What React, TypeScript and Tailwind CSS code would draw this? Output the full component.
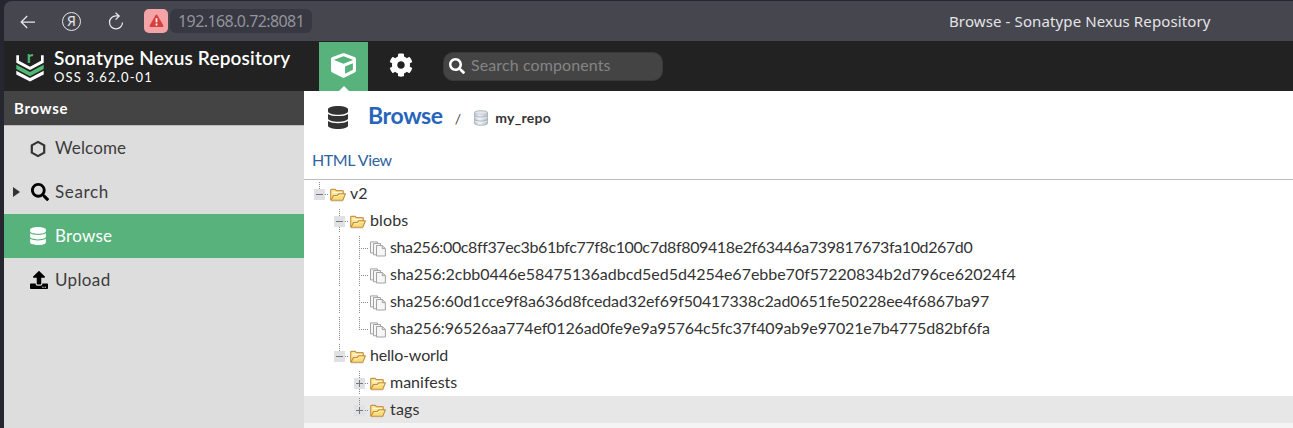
import type { ReactNode } from 'react';
import { FaCog, FaCube, FaDatabase, FaSearch, FaUpload } from 'react-icons/fa';

type Guide = 'none' | 'line' | 'tee' | 'end' | 'minus' | 'minus-end' | 'plus' | 'plus-end';

function GuideCell({ kind }: { kind: Guide }) {
  const box = kind.startsWith('minus') || kind.startsWith('plus');
  const last = kind.endsWith('end');
  return (
    <svg width="20" height="27" viewBox="0 0 20 27" shapeRendering="crispEdges" className="shrink-0">
      {kind !== 'none' && (
        <path d={last ? 'M9.5 2V14' : 'M9.5 2V25'} stroke="#8a8a8a" strokeDasharray="1 1" />
      )}
      {kind !== 'none' && kind !== 'line' && <path d="M9 14.5H18" stroke="#8a8a8a" strokeDasharray="1 1" />}
      {box && <rect x="4" y="9" width="11" height="11" fill="#dfe1e5" />}
      {box && <path d="M6 14.5H13" stroke="#777" />}
      {kind.startsWith('plus') && <path d="M9.5 11V18" stroke="#777" />}
    </svg>
  );
}

function FolderIcon() {
  return (
    <svg width="16" height="16" viewBox="0 0 16 16" className="shrink-0">
      <path d="M.7 13V3.2q0-.9.9-.9h3.6l1.2 1.4h6.1q.8 0 .8.8v2.3" fill="#fbe79c" stroke="#c9954a" strokeWidth="1.2" />
      <path d="M2.4 5.5h9.3" stroke="#fff8d6" />
      <path d="M1 13.3 3.4 8.6h3.8l1.4-1.7h6.8l-2.6 6.4z" fill="#fbdc7a" stroke="#c38c3c" strokeWidth="1.1" strokeLinejoin="round" />
      <path d="M4.2 9.7h3.5l1.3-1.6h4.7" fill="none" stroke="#fff2b8" />
      <path d="M1 14.6h12" stroke="#ddd" strokeWidth=".7" />
    </svg>
  );
}

function PagesIcon() {
  return (
    <svg width="16" height="16" viewBox="0 0 16 16" className="shrink-0" fill="#f6f6f6" stroke="#a3a3a3">
      <path d="M.5.9h7v11h-7z" />
      <path d="M3.5 2.5h7v11.3h-7z" />
      <path d="M6.5 4.5h6l2.9 2.9v7.6H6.5z" />
      <path d="M12.3 4.6v3h3" fill="#ddd" />
    </svg>
  );
}

function RepoIcon() {
  return (
    <svg width="14" height="16" viewBox="0 0 14 16" className="shrink-0">
      <defs>
        <linearGradient id="steel">
          <stop offset="0" stopColor="#b9c3cd" />
          <stop offset=".4" stopColor="#eef2f6" />
          <stop offset="1" stopColor="#b3bdc8" />
        </linearGradient>
      </defs>
      <path d="M.5 2.3C.5.2 13.5.2 13.5 2.3v11.2c0 2.4-13 2.4-13 0z" fill="url(#steel)" stroke="#a5aeb8" strokeWidth=".8" />
      <ellipse cx="7" cy="2.7" rx="6" ry="1.6" fill="#e1e7ed" stroke="#b3bcc6" strokeWidth=".5" />
      <path d="M.6 5.8c1.3 1.8 11.5 1.8 12.8 0M.6 9.8c1.3 1.8 11.5 1.8 12.8 0" fill="none" stroke="#a3adb7" />
      <path d="M.9 6.8c1.3 1.8 10.9 1.8 12.2 0M.9 10.8c1.3 1.8 10.9 1.8 12.2 0" fill="none" stroke="#fff" strokeWidth=".7" />
    </svg>
  );
}

function NexusLogo() {
  return (
    <svg width="28" height="31" viewBox="0 0 28 31" className="shrink-0 overflow-visible">
      <path d="M.3 4.3V11.7L14 19l13.7-7.3V4.3H25v5.5l-11 6-11-6V4.3z" fill="#fff" />
      <path d="M.3 13.8 14 21l13.7-7.2v4.3L14 25.3.3 18.1z" fill="#4fb872" />
      <path d="M.3 19.7 14 26.9l13.7-7.2v3.7L14 30.6.3 23.4z" fill="#fff" />
      <text x="10.8" y="11.6" fontSize="17" fontWeight="700" fill="#4fb872">
        r
      </text>
    </svg>
  );
}

function BrowserBar() {
  return (
    <div className="flex h-[41px] shrink-0 bg-[#25262f] pt-px">
      <div className="ml-1 flex flex-1 items-center rounded-tl-lg bg-[#46464f]">
        <svg width="16" height="16" viewBox="0 0 16 16" className="ml-4 mt-px" fill="none" stroke="#e8e8ea" strokeWidth="1.25">
          <path d="M15 8H1.2M7.2 2 1.2 8l6 6" />
        </svg>
        <div className="ml-[26px] flex size-[19px] items-center justify-center rounded-full border border-[#e8e8ea] font-['Noto_Sans',sans-serif] text-[14px] leading-none text-[#e8e8ea]">
          Я
        </div>
        <svg width="16" height="18" viewBox="0 0 16 18" className="ml-[27px]" fill="none" stroke="#e8e8ea" strokeWidth="1.25">
          <path d="M11 3.9H8a6.5 6.5 0 1 0 6.5 6.6M7.5.7 11.2 4 7.6 7.6" />
        </svg>
        <div className="ml-5 flex size-6 items-center justify-center rounded-[5px] bg-[#f4a3a6]">
          <svg width="15" height="14" viewBox="0 0 15 14">
            <path d="M7.5 1.5 13.5 12h-12z" fill="#d84040" stroke="#d84040" strokeWidth="2" strokeLinejoin="round" />
            <path d="M7.5 4.3v4M7.5 9.6v1.9" stroke="#fff" strokeWidth="1.7" />
          </svg>
        </div>
        <div className="ml-0.5 flex h-6 w-[142px] items-center rounded-md bg-[#373842] pl-2 font-['Noto_Sans',sans-serif] text-[16px] tracking-[-0.58px] text-[#93939b]">
          192.168.0.72:8081
        </div>
        <div className="ml-[637px] whitespace-nowrap font-['Noto_Sans',sans-serif] text-[15px] tracking-[0.12px] text-[#e4e4e6]">
          Browse - Sonatype Nexus Repository
        </div>
      </div>
    </div>
  );
}

function AppHeader() {
  return (
    <header className="flex h-[50px] shrink-0 bg-[#222] text-white">
      <div className="flex w-[315px] items-center pl-3">
        <NexusLogo />
        <div className="mb-px ml-2.5 flex flex-col whitespace-nowrap">
          <span className="text-[19px] font-semibold leading-[22px] tracking-[0.17px]">Sonatype Nexus Repository</span>
          <span className="text-[13px] leading-4 tracking-[1.15px]">OSS 3.62.0-01</span>
        </div>
      </div>
      <div className="mt-px flex w-[49px] flex-col items-center bg-[#57b27b]">
        <FaCube className="mt-[11px] size-[25px]" />
        <svg width="10" height="5" viewBox="0 0 10 5" className="mt-auto">
          <path d="M0 5 5 0l5 5z" fill="#fff" />
        </svg>
      </div>
      <div className="flex w-[65px] items-center justify-center">
        <FaCog className="mb-0.5 size-6" />
      </div>
      <div className="ml-[10px] mt-[11px] flex h-[29px] w-[220px] items-center rounded-[10px] border border-[#393939] bg-[#444] pl-[5px]">
        <FaSearch className="mb-0.5 size-4" />
        <span className="mb-[3px] ml-1.5 text-[16px] tracking-[0.1px] text-[#848484]">Search components</span>
      </div>
    </header>
  );
}

function NavItem({ icon, label, active, expandable, spacing }: {
  icon: ReactNode;
  label: string;
  active?: boolean;
  expandable?: boolean;
  spacing: string;
}) {
  return (
    <li className={`flex h-11 items-center text-[17px] ${spacing} ${active ? 'bg-[#57b27b] text-white' : 'text-[#3c3c3c]'}`}>
      <span className="flex w-[26px] pl-[9px]">
        {expandable && (
          <svg width="7" height="10" viewBox="0 0 7 10">
            <path d="M0 0 7 5 0 10z" fill="#333" />
          </svg>
        )}
      </span>
      <span className="flex w-[25px]">{icon}</span>
      <span>{label}</span>
    </li>
  );
}

function Sidebar() {
  return (
    <nav className="w-[300px] shrink-0 bg-[#ddd]">
      <h2 className="flex h-[35px] items-center border-b border-[#bcbcbc] bg-[#444] pl-2.5 text-[15px] font-bold tracking-[0.65px] text-white">
        Browse
      </h2>
      <ul>
        <NavItem
          label="Welcome"
          spacing="tracking-[0.15px]"
          icon={
            <svg width="16" height="18" viewBox="0 0 16 18" className="mt-px">
              <path d="M8 1.9 14.2 5.4v7.2L8 16.1l-6.2-3.5V5.4z" fill="none" stroke="#333" strokeWidth="2.2" />
            </svg>
          }
        />
        <NavItem label="Search" spacing="tracking-[0.65px]" expandable icon={<FaSearch className="ml-px size-[18px] text-black" />} />
        <NavItem label="Browse" spacing="tracking-[0.25px]" active icon={<FaDatabase className="h-[18px] w-4" />} />
        <NavItem label="Upload" spacing="tracking-[0.35px]" icon={<FaUpload className="size-[18px] text-black" />} />
      </ul>
    </nav>
  );
}

interface TreeNode {
  guides: Guide[];
  label: string;
  file?: boolean;
  selected?: boolean;
  spacing?: string;
}

const nodes: TreeNode[] = [
  { guides: ['minus-end'], label: 'v2' },
  { guides: ['none', 'minus'], label: 'blobs', spacing: 'tracking-[0.15px]' },
  { guides: ['none', 'line', 'tee'], file: true, spacing: 'tracking-[-0.38px]', label: 'sha256:00c8ff37ec3b61bfc77f8c100c7d8f809418e2f63446a739817673fa10d267d0' },
  { guides: ['none', 'line', 'tee'], file: true, spacing: 'tracking-[-0.02px]', label: 'sha256:2cbb0446e58475136adbcd5ed5d4254e67ebbe70f57220834b2d796ce62024f4' },
  { guides: ['none', 'line', 'tee'], file: true, spacing: 'tracking-[-0.12px]', label: 'sha256:60d1cce9f8a636d8fcedad32ef69f50417338c2ad0651fe50228ee4f6867ba97' },
  { guides: ['none', 'line', 'end'], file: true, spacing: 'tracking-[-0.14px]', label: 'sha256:96526aa774ef0126ad0fe9e9a95764c5fc37f409ab9e97021e7b4775d82bf6fa' },
  { guides: ['none', 'minus-end'], label: 'hello-world', spacing: 'tracking-[-0.18px]' },
  { guides: ['none', 'none', 'plus'], label: 'manifests' },
  { guides: ['none', 'none', 'plus-end'], label: 'tags', selected: true, spacing: 'tracking-[0.2px]' },
];

function Tree() {
  return (
    <ul className="shrink-0">
      {nodes.map((node) => (
        <li key={node.label} className={`flex h-[27px] items-center pl-1.5 ${node.selected ? 'bg-[#e7e7e7]' : ''}`}>
          {node.guides.map((kind, i) => (
            <GuideCell key={i} kind={kind} />
          ))}
          <span className="mt-[3px]">{node.file ? <PagesIcon /> : <FolderIcon />}</span>
          <span className={`mb-0.5 ml-1 whitespace-nowrap text-[16px] text-[#333] ${node.spacing ?? ''}`}>{node.label}</span>
        </li>
      ))}
      <li className="h-[5px] bg-[#f4f4f4]" />
    </ul>
  );
}

export default function App() {
  return (
    <div className="flex h-[428px] w-[1293px] flex-col overflow-hidden bg-[#25262f] font-['Lato','Liberation_Sans',sans-serif]">
      <BrowserBar />
      <div className="ml-1 flex min-h-0 flex-1 flex-col">
        <AppHeader />
        <div className="flex min-h-0 flex-1">
          <Sidebar />
          <main className="flex min-w-0 flex-1 flex-col bg-white">
            <div className="flex h-[52px] shrink-0 items-center pl-6">
              <FaDatabase className="h-[23px] w-5 text-[#333]" />
              <h1 className="mb-1 ml-5 text-[23px] font-bold leading-none tracking-[-0.35px] text-[#2765bd]">Browse</h1>
              <span className="ml-3 mt-0.5 text-[14px] text-[#444]">/</span>
              <span className="ml-[13px] mt-0.5">
                <RepoIcon />
              </span>
              <span className="ml-[7px] text-[14px] font-bold tracking-[0.3px] text-[#333]">my_repo</span>
            </div>
            <div className="flex h-[37px] shrink-0 items-center border-b border-[#bdbdbd] pb-0.5 pl-2 text-[16px] tracking-[-0.4px] text-[#30639f]">
              HTML View
            </div>
            <Tree />
          </main>
        </div>
      </div>
    </div>
  );
}
